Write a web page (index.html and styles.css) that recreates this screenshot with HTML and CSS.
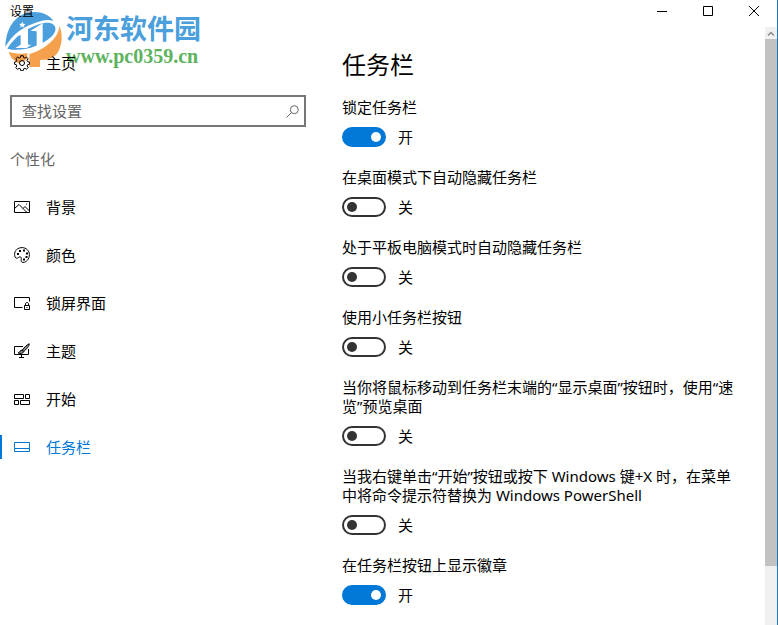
FILE: index.html
```html
<!doctype html>
<html lang="zh-CN">
<head>
<meta charset="utf-8">
<meta name="viewport" content="width=device-width,initial-scale=1">
<title>设置</title>
<link rel="stylesheet" href="styles.css">
</head>
<body>

<div class="window">

	<div class="watermark">
		<svg class="watermark-logo" viewBox="15 33 171 168" aria-hidden="true">
			<path d="M16 140 C18 78 52 36 102 36 C128 36 148 46 160 62 C142 58 128 60 114 66 C72 78 38 102 16 140Z" fill="#4a9fdc" />
			<path d="M22 146 C42 112 82 78 136 68 C170 66 176 90 152 112 C124 138 64 158 22 146Z" fill="#4a9fdc" />
			<path d="M178 78 C190 104 186 136 172 160 C160 176 142 180 120 180 V201 H88 V162 C132 150 176 116 178 78Z" fill="#f4a04c" />
			<path d="M26 156 C48 162 66 162 82 160 V176 C74 184 66 182 56 190 C40 182 30 170 26 156Z" fill="#f4a04c" />
			<path d="M46 108 L84 84 V134 H94 L80 144 H46 L62 134 V106Z M92 92 L128 70 V132 L110 138 V94Z" fill="#fff" />
			<path d="M67 65 l3 6 7 1 -5 4 1 7 -6 -4 -6 4 1 -7 -5 -4 7 -1Z" fill="#fff" />
		</svg>
		<div class="watermark-text">
			<div class="watermark-name">河东软件园</div>
			<div class="watermark-url">www.pc0359.cn</div>
		</div>
	</div>

	<header class="titlebar">
		<span class="titlebar-text">设置</span>
		<button class="caption" aria-label="最小化"><svg viewBox="0 0 10 10"><path d="M0 5.5H10" /></svg></button>
		<button class="caption" aria-label="最大化"><svg viewBox="0 0 10 10"><path d="M.5 .5H9.5V9.5H.5Z" /></svg></button>
		<button class="caption" aria-label="关闭"><svg viewBox="0 0 10 10"><path d="M0 0L10 10M10 0L0 10" /></svg></button>
	</header>

	<div class="content">

		<aside class="sidebar">
			<a class="item" href="#">
				<svg class="icon" viewBox="0 0 16 16"><path d="M6.8 .7h2.4l.4 1.9 1.3.5 1.6-1 1.6 1.6-1 1.6.5 1.4 1.8.3v2.3l-1.8.4-.5 1.3 1 1.6-1.6 1.7-1.6-1-1.3.5-.4 1.9H6.8l-.4-1.9-1.3-.5-1.6 1-1.7-1.7 1-1.6-.5-1.3-1.7-.4V7l1.7-.3.5-1.4-1-1.6 1.7-1.6 1.6 1 1.3-.5Z" /><circle cx="8" cy="8" r="2.5" /></svg>
				主页
			</a>

			<form class="search">
				<input class="search-input" type="text" placeholder="查找设置" aria-label="查找设置">
				<button class="search-button" type="button" aria-label="搜索"><svg viewBox="0 0 13 13"><circle cx="8.3" cy="4.7" r="4" /><path d="M5.4 7.6L.5 12.5" /></svg></button>
			</form>

			<h2 class="group">个性化</h2>

			<nav>
				<a class="item" href="#">
					<svg class="icon" viewBox="0 0 16 16"><path d="M.5 2.5h15v11H.5Z" /><path d="M.5 9.5L5 5.5l7.5 7.5 M9 9.5l2-2 4.5 4.5 M12 5h1" /></svg>
					背景
				</a>
				<a class="item" href="#">
					<svg class="icon" viewBox="0 0 16 16"><path d="M.6 7.5C.5 3.5 3.8.6 8 .6s7.4 3.1 7.4 7.1c0 4.4-3.1 7.7-6.4 7.7-1.7 0-2-1.2-1.8-2.5.2-1.5.2-3.1-1.3-3.1-1.4 0-1.6 1.4-3.2 1.4C1.2 11.2.6 9.3.6 7.5Z" /><path class="solid" d="M3 6h2v2H3Z M5 3h2v2H5Z M9 2.500h2v2H9Z M12 5.500h2v2h-2Z M11.500 9h2v2h-2Z M9 11.500h2v2H9Z" /></svg>
					颜色
				</a>
				<a class="item" href="#">
					<svg class="icon" viewBox="0 0 16 16"><path d="M8.500 12.500H.5v-10h15v4 M10.500 10.500h5v4h-5Z M11.500 10.500V9c0-2 3-2 3 0v1.500" /><path d="M12.500 12.500h1" /></svg>
					锁屏界面
				</a>
				<a class="item" href="#">
					<svg class="icon" viewBox="0 0 16 16"><path d="M9 3.500H.5v8h14V6 M7.500 11.500v3 M5 14.500h5" /><path class="shade" d="M15.300.8c-1.800.2-5.300 4-7 6.200l1.500 1.500c2.200-1.800 5.700-5.700 5.500-7.700Z" /><path class="shade" d="M8 7.300c-1.800-.3-2 1-2.300 1.700-.3.700-1 .8-1.700.8 1.800 1.300 5.500.9 5.500-1.200Z" /></svg>
					主题
				</a>
				<a class="item" href="#">
					<svg class="icon" viewBox="0 0 16 16"><path d="M.5 3.500h9v4h-9Z M11.500 3.500h4v4h-4Z M.5 9.500h4v4h-4Z M6.500 9.500h9v4h-9Z" /></svg>
					开始
				</a>
				<a class="item selected" href="#" aria-current="page">
					<svg class="icon" viewBox="0 0 16 16"><path d="M.5 3.500h15v9H.5Z M.5 9.500h15" /></svg>
					任务栏
				</a>
			</nav>
		</aside>

		<main class="page">
			<h1 class="heading">任务栏</h1>

			<div class="setting">
				<label class="setting-label" for="lock">锁定任务栏</label>
				<div class="setting-control"><input class="toggle" type="checkbox" id="lock" checked><span class="state"></span></div>
			</div>
			<div class="setting">
				<label class="setting-label" for="hideDesktop">在桌面模式下自动隐藏任务栏</label>
				<div class="setting-control"><input class="toggle" type="checkbox" id="hideDesktop"><span class="state"></span></div>
			</div>
			<div class="setting">
				<label class="setting-label" for="hideTablet">处于平板电脑模式时自动隐藏任务栏</label>
				<div class="setting-control"><input class="toggle" type="checkbox" id="hideTablet"><span class="state"></span></div>
			</div>
			<div class="setting">
				<label class="setting-label" for="small">使用小任务栏按钮</label>
				<div class="setting-control"><input class="toggle" type="checkbox" id="small"><span class="state"></span></div>
			</div>
			<div class="setting">
				<label class="setting-label" for="peek">当你将鼠标移动到任务栏末端的“显示桌面”按钮时，使用“速览”预览桌面</label>
				<div class="setting-control"><input class="toggle" type="checkbox" id="peek"><span class="state"></span></div>
			</div>
			<div class="setting">
				<label class="setting-label" for="powershell">当我右键单击“开始”按钮或按下 Windows 键+X 时，在菜单中将命令提示符替换为 Windows PowerShell</label>
				<div class="setting-control"><input class="toggle" type="checkbox" id="powershell"><span class="state"></span></div>
			</div>
			<div class="setting">
				<label class="setting-label" for="badges">在任务栏按钮上显示徽章</label>
				<div class="setting-control"><input class="toggle" type="checkbox" id="badges" checked><span class="state"></span></div>
			</div>
		</main>

		<div class="scrollbar">
			<button class="scroll-up" aria-label="向上滚动"><svg viewBox="0 0 8 5"><path d="M1 4.500L4 1.500L7 4.500" /></svg></button>
			<div class="scroll-track"><div class="scroll-thumb"></div></div>
		</div>

	</div>

</div>

</body>
</html>
```
FILE: styles.css
```css
* { box-sizing: border-box; }
body { background: #fff; color: #000; font: 15px/19px "Noto Sans", "Noto Sans CJK SC", sans-serif; margin: 0; }
button { background: none; border: none; color: inherit; cursor: pointer; padding: 0; }
svg { display: block; fill: none; stroke: currentColor; }

.window { border-right: 1px solid #1979ba; display: flex; flex-direction: column; isolation: isolate; min-height: 100vh; position: relative; }

/* title bar */
.titlebar { align-items: center; display: flex; height: 22px; margin-bottom: 5px; }
.titlebar-text { flex: 1; font-size: 12px; padding-left: 10px; }
.caption { align-items: center; display: flex; height: 22px; justify-content: center; width: 46px; }
.caption:hover { background: #e5e5e5; }
.caption svg { height: 10px; overflow: visible; width: 10px; }

.content { display: flex; flex: 1; }

/* left column */
.sidebar { flex: none; padding-top: 12px; width: 306px; }
.item { align-items: center; color: #000; display: flex; height: 48px; text-decoration: none; }
.item::before { content: ""; height: 24px; margin-right: 12px; width: 2px; }
.item:hover { background: rgba(0, 0, 0, 0.05); }
.icon { height: 16px; margin-right: 16px; width: 16px; }
.solid { fill: currentColor; stroke: none; }
.shade { fill: #888; }
.selected { color: #0078d7; }
.selected::before { background: #0078d7; }

.search { border: 2px solid #767676; display: flex; height: 32px; margin: 8px 0 0 10px; }
.search-input { background: none; border: none; color: #000; flex: 1; font: inherit; min-width: 0; outline: none; padding: 0 10px; }
.search-input::placeholder { color: #666; opacity: 1; }
.search-button { align-items: center; color: #666; display: flex; justify-content: center; width: 24px; }
.search-button svg { height: 13px; width: 13px; }

.group { color: #666; font-size: 15px; font-weight: normal; line-height: 22px; margin: 0; padding: 21px 0 13px 10px; }

/* right column */
.page { flex: 1; min-width: 0; padding: 20px 22px 9px 36px; }
.heading { font-size: 24px; font-weight: normal; line-height: 36px; margin: 0 0 15px; }
.setting { margin-bottom: 21px; }
.setting:last-child { margin-bottom: 0; }
.setting-label { display: block; }
.setting-control { align-items: center; display: flex; gap: 12px; height: 20px; margin-top: 10px; }

.toggle { align-items: center; appearance: none; border: 2px solid #333; border-radius: 10px; cursor: pointer; display: flex; height: 20px; margin: 0; padding: 0 3px; width: 44px; }
.toggle::before { background: #333; border-radius: 50%; content: ""; height: 10px; width: 10px; }
.toggle:checked { background: #0078d7; border-color: #0078d7; justify-content: flex-end; }
.toggle:checked::before { background: #fff; }
.state::before { content: "关"; }
.toggle:checked + .state::before { content: "开"; }

.scrollbar { background: #f0f0f0; display: flex; flex: none; flex-direction: column; width: 12px; }
.scroll-up { align-items: center; color: #888; display: flex; height: 12px; justify-content: center; width: 12px; }
.scroll-up svg { height: 5px; stroke-width: 1.5; width: 8px; }
.scroll-track { display: grid; flex: 1; grid-template-rows: 9fr 1fr; }
.scroll-thumb { background: #c2c2c2; }

/* site mark, lies under the text */
.watermark { display: flex; gap: 4px; left: 5px; pointer-events: none; position: absolute; top: 11px; z-index: -1; }
.watermark-logo { height: 56px; stroke: none; width: 57px; }
.watermark-name { color: #4a9fdc; font: bold 27px/34px "Noto Sans CJK SC", sans-serif; }
.watermark-url { color: #5cb35c; font: bold 20px/22px "Liberation Serif", serif; }
```
